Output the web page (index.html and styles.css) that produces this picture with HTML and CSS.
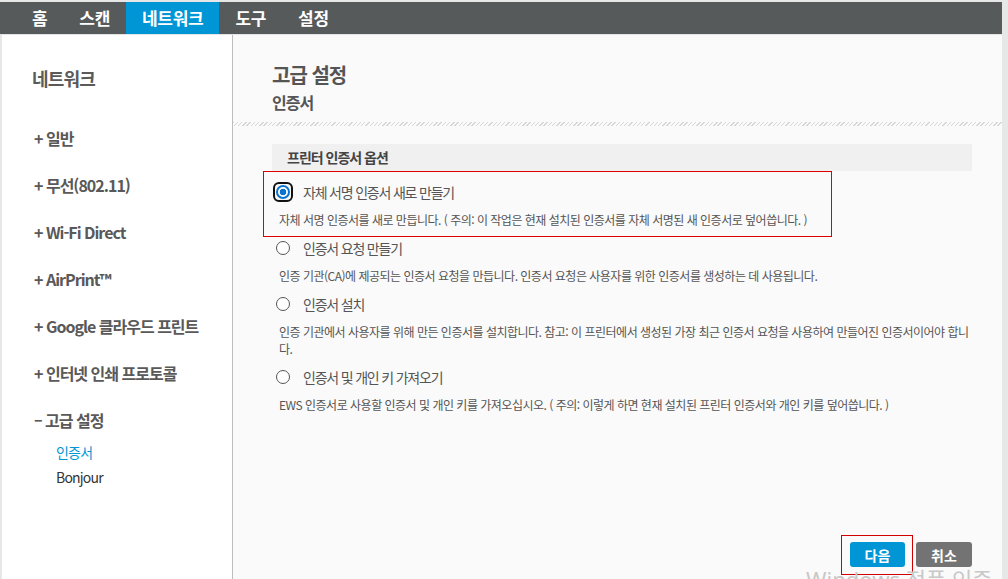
FILE: index.html
```html
<!DOCTYPE html>
<html lang="ko">
<head>
  <meta charset="UTF-8" />
  <meta name="viewport" content="width=device-width, initial-scale=1.0"/>
  <title>네트워크 - 고급 설정</title>
  <link rel="stylesheet" href="styles.css">
</head>
<body>
  <div class="app">
    <nav class="topnav">
      <a href="#">홈</a>
      <a href="#">스캔</a>
      <a href="#" class="active">네트워크</a>
      <a href="#">도구</a>
      <a href="#">설정</a>
    </nav>

    <div class="layout">
      <aside class="sidebar">
        <h2>네트워크</h2>
        <ul class="menu">
          <li>+ 일반</li>
          <li>+ 무선(802.11)</li>
          <li>+ Wi-Fi Direct</li>
          <li>+ AirPrint™</li>
          <li>+ Google 클라우드 프린트</li>
          <li>+ 인터넷 인쇄 프로토콜</li>
          <li class="open">– 고급 설정
            <ul class="submenu">
              <li class="current">인증서</li>
              <li>Bonjour</li>
            </ul>
          </li>
        </ul>
      </aside>

      <main class="content">
        <div class="page-head">
          <h1>고급 설정</h1>
          <h3>인증서</h3>
        </div>
        <div class="divider"></div>

        <section class="panel">
          <div class="panel-title">프린터 인증서 옵션</div>
          <div class="options">
            <div class="option highlight">
              <div class="option-head"><span class="radio checked"></span><span>자체 서명 인증서 새로 만들기</span></div>
              <p class="desc">자체 서명 인증서를 새로 만듭니다. ( 주의: 이 작업은 현재 설치된 인증서를 자체 서명된 새 인증서로 덮어씁니다. )</p>
            </div>
            <div class="option">
              <div class="option-head"><span class="radio"></span><span>인증서 요청 만들기</span></div>
              <p class="desc">인증 기관(CA)에 제공되는 인증서 요청을 만듭니다. 인증서 요청은 사용자를 위한 인증서를 생성하는 데 사용됩니다.</p>
            </div>
            <div class="option">
              <div class="option-head"><span class="radio"></span><span>인증서 설치</span></div>
              <p class="desc">인증 기관에서 사용자를 위해 만든 인증서를 설치합니다. 참고: 이 프린터에서 생성된 가장 최근 인증서 요청을 사용하여 만들어진 인증서이어야 합니다.</p>
            </div>
            <div class="option">
              <div class="option-head"><span class="radio"></span><span>인증서 및 개인 키 가져오기</span></div>
              <p class="desc">EWS 인증서로 사용할 인증서 및 개인 키를 가져오십시오. ( 주의: 이렇게 하면 현재 설치된 프린터 인증서와 개인 키를 덮어씁니다. )</p>
            </div>
          </div>
        </section>

        <div class="actions">
          <button class="btn primary">다음</button>
          <button class="btn secondary">취소</button>
        </div>
      </main>
    </div>
  </div>

  <div class="watermark">Windows 정품 인증</div>
</body>
</html>
```

FILE: styles.css
```css
html, body {
  margin: 0;
  height: 100%;
}

body {
  font-family: "Noto Sans CJK KR", "Noto Sans", sans-serif;
  background: #e6e8e8;
  color: #555;
  overflow: hidden;
  position: relative;
}

.app {
  height: 577px;
  margin: 2px 6px 0 0;
  display: flex;
  flex-direction: column;
}

/* top bar */
.topnav {
  height: 32px;
  background: #565a5b;
  display: flex;
  padding-left: 16px;
  box-shadow: 0 1px 0 #e4e4e4;
  position: relative;
  z-index: 1;
}

.topnav a {
  color: #fff;
  text-decoration: none;
  font-size: 17px;
  font-weight: bold;
  line-height: 32px;
  padding: 0 16px;
  letter-spacing: -0.3px;
}

.topnav a.active {
  background: #0096d6;
}

.layout {
  flex: 1;
  display: flex;
  margin-left: 2px;
  min-height: 0;
}

/* left menu */
.sidebar {
  width: 231px;
  box-sizing: border-box;
  background: #fff;
  border-right: 1px solid #bdbdbd;
  padding: 32px 0 0 30px;
}

.sidebar h2 {
  margin: 0;
  font-size: 18px;
  font-weight: 600;
  line-height: 24px;
  letter-spacing: -0.8px;
  color: #5a5a5a;
}

.menu {
  list-style: none;
  margin: 36px 0 0;
  padding: 0;
  display: flex;
  flex-direction: column;
  gap: 23px;
}

.menu > li {
  font-size: 16px;
  font-weight: bold;
  line-height: 24px;
  letter-spacing: -1px;
  color: #595959;
  padding-left: 2px;
}

.submenu {
  list-style: none;
  margin: 8px 0 0 22px;
  padding: 0;
}

.submenu li {
  font-size: 14px;
  font-weight: normal;
  line-height: 25px;
  letter-spacing: -0.8px;
  color: #333;
}

.submenu li.current {
  color: #0096d6;
}

/* main area */
.content {
  flex: 1;
  background: #fafafa;
  display: flex;
  flex-direction: column;
}

.page-head {
  padding: 28px 0 0 39px;
}

.page-head h1 {
  margin: 0;
  font-size: 20px;
  line-height: 26px;
  font-weight: bold;
  letter-spacing: -1px;
  color: #555;
}

.page-head h3 {
  margin: 4px 0 0;
  font-size: 16px;
  line-height: 20px;
  font-weight: bold;
  letter-spacing: -1px;
  color: #555;
}

.divider {
  height: 4px;
  margin-top: 10px;
  background: repeating-linear-gradient(135deg, #d6d6d6 0 1px, transparent 1px 3px);
}

.panel {
  margin: 18px 30px 0 39px;
}

.panel-title {
  height: 27px;
  line-height: 27px;
  background: #f0f0f0;
  padding-left: 15px;
  font-size: 14px;
  font-weight: bold;
  letter-spacing: -1px;
  color: #444;
}

.options {
  padding-top: 11px;
}

.option {
  position: relative;
  padding-bottom: 10px;
}

.option-head {
  display: flex;
  align-items: center;
  height: 20px;
  padding-left: 4px;
  font-size: 14px;
  letter-spacing: -1.2px;
  color: #555;
}

.radio {
  width: 14px;
  height: 14px;
  box-sizing: border-box;
  border: 1.5px solid #555;
  border-radius: 50%;
  background: #fff;
  margin-right: 13px;
  flex: none;
  position: relative;
}

.radio.checked {
  border: 2px solid #0b74d0;
  background: radial-gradient(circle, #0b74d0 0 3px, #fff 3.6px);
}

.radio.checked::before {
  content: '';
  position: absolute;
  inset: -5px;
  border: 2px solid #111;
  border-radius: 6px;
}

.desc {
  margin: 9px 0 0 7px;
  font-size: 12px;
  line-height: 17px;
  letter-spacing: -0.5px;
  color: #555;
}

.highlight::after {
  content: '';
  position: absolute;
  left: -9px;
  top: -11px;
  width: 569px;
  height: 66px;
  box-sizing: border-box;
  border: 1px solid #e00000;
  pointer-events: none;
}

/* bottom buttons */
.actions {
  margin-top: auto;
  display: flex;
  justify-content: flex-end;
  gap: 11px;
  padding: 0 30px 12px 0;
}

.btn {
  height: 25px;
  border: none;
  border-radius: 3px;
  color: #fff;
  font-family: inherit;
  font-size: 14px;
  font-weight: bold;
  padding: 0;
  cursor: pointer;
  position: relative;
}

.btn.primary {
  width: 55px;
  background: #0096d6;
}

.btn.primary::after {
  content: '';
  position: absolute;
  left: -9px;
  right: -8px;
  top: -7px;
  bottom: -8px;
  border: 1.5px solid #d00000;
}

.btn.secondary {
  width: 56px;
  background: #737373;
}

.watermark {
  position: absolute;
  left: 806px;
  top: 568px;
  font-family: "Noto Sans", "Noto Sans CJK KR", sans-serif;
  font-size: 22px;
  line-height: 1;
  color: #c8c8c8;
  white-space: nowrap;
}
```
